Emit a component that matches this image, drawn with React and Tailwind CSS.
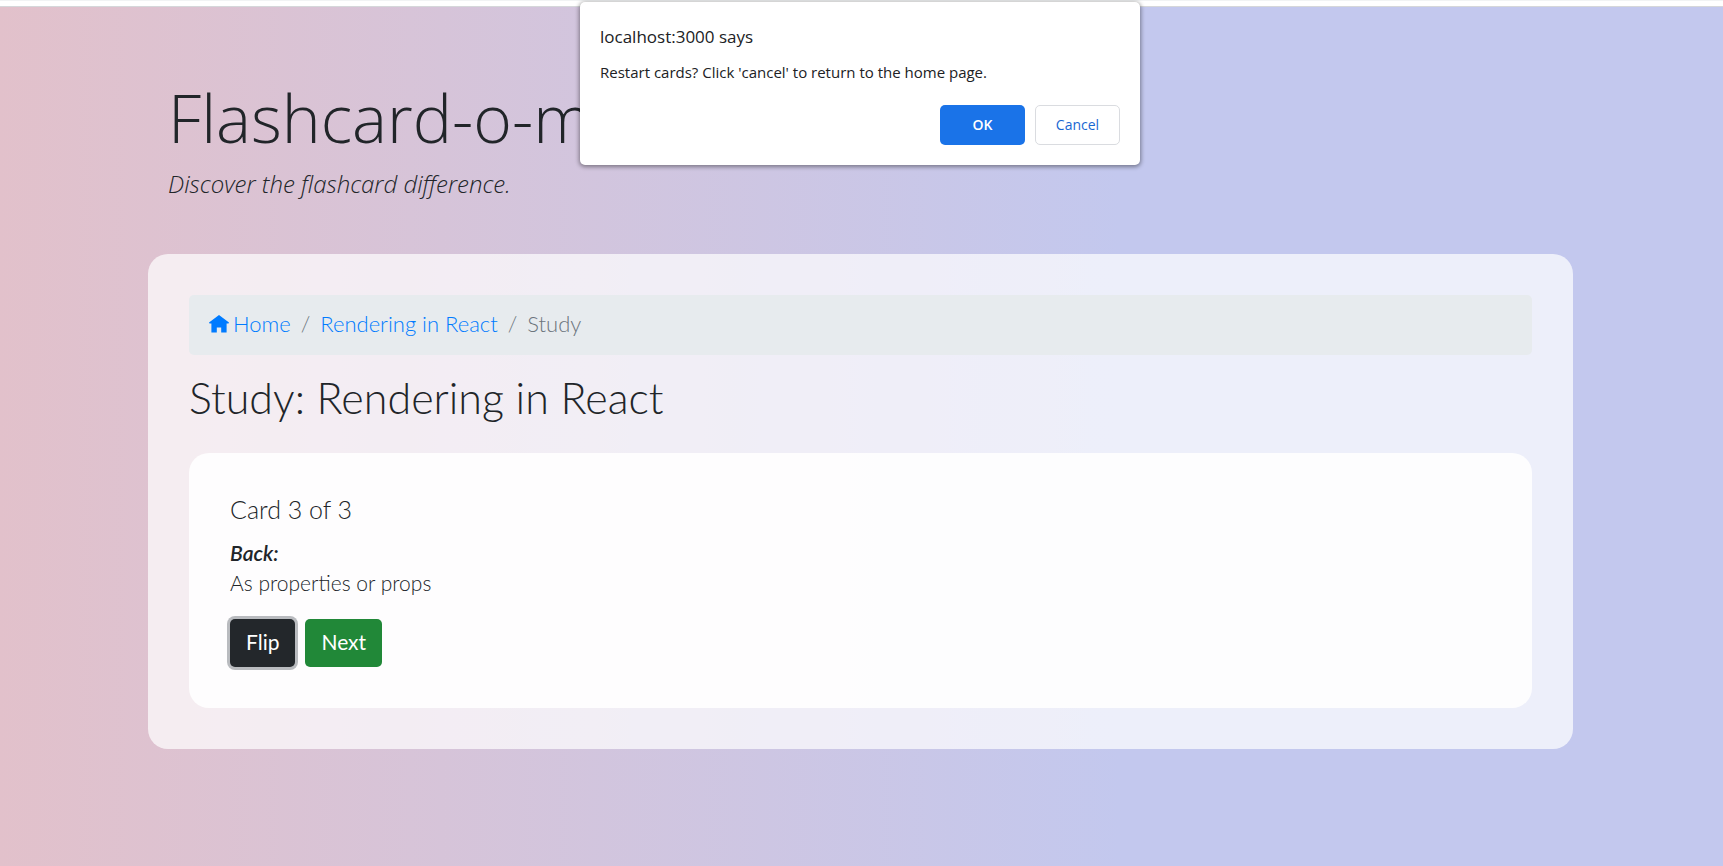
import React from "react";

function HomeIcon() {
  return (
    <svg viewBox="0 0 20 18" className="h-[18px] w-5 fill-current" aria-hidden="true">
      <path d="M10 0 0 7.6l.5.9H2.4V17.6H7.8V12.4h4.4v5.2h5.4V8.5h1.9l.5-.9Z" />
    </svg>
  );
}

function Header() {
  return (
    <header className="px-5 pt-[68px] font-['Open_Sans','Noto_Sans',sans-serif] font-light">
      <h1 className="text-[66px] leading-[84px]">Flashcard-o-matic</h1>
      <p className="mt-1.5 text-2xl leading-[38px] italic">Discover the flashcard difference.</p>
    </header>
  );
}

function Breadcrumb() {
  return (
    <nav aria-label="breadcrumb" className="rounded-[5px] bg-[#e7ebee] px-5 pt-3.5 pb-4">
      <ol className="flex items-center text-[22px] leading-[30px]">
        <li>
          <a href="#home" className="flex items-center gap-1 text-[#007bff]">
            <HomeIcon />
            Home
          </a>
        </li>
        <li className="px-[10px] text-[#6c757d]" aria-hidden="true">/</li>
        <li>
          <a href="#deck" className="text-[#007bff]">Rendering in React</a>
        </li>
        <li className="px-[10px] text-[#6c757d]" aria-hidden="true">/</li>
        <li className="text-[#6c757d]" aria-current="page">Study</li>
      </ol>
    </nav>
  );
}

function StudyCard() {
  return (
    <section className="mt-8 rounded-[20px] bg-white/90 p-[41px]">
      <h3 className="text-[25px] leading-[30px]">Card 3 of 3</h3>
      <p className="mt-3.5 text-[21px] leading-[30px]">
        <em className="font-semibold">Back:</em>
        <br />
        As properties or props
      </p>
      <div className="mt-[21px] flex gap-[10px] text-[21px] leading-[30px] font-normal text-white">
        <button type="button" className="rounded-[5px] bg-[#23272b] px-4 pt-2 pb-[10px] ring-[3px] ring-[#b9bbbf]">Flip</button>
        <button type="button" className="rounded-[5px] bg-[#218838] px-4 pt-2 pb-[10px]">Next</button>
      </div>
    </section>
  );
}

function ConfirmDialog() {
  return (
    <div
      role="dialog"
      aria-labelledby="dialog-title"
      className="absolute top-0.5 right-[3px] left-0 mx-auto w-[560px] rounded-[5px] bg-white p-5 font-['Open_Sans','Noto_Sans',sans-serif] font-normal text-[#202124] shadow-[0_1px_4px_1px_rgba(0,0,0,0.4)]"
    >
      <h2 id="dialog-title" className="text-[17px] leading-[30px]">localhost:3000 says</h2>
      <p className="mt-2 text-[15px] leading-6">Restart cards? Click 'cancel' to return to the home page.</p>
      <div className="mt-[21px] flex justify-end gap-[10px] text-sm font-semibold">
        <button type="button" className="h-10 w-[85px] rounded-[5px] bg-[#1a73e8] text-white">OK</button>
        <button type="button" className="h-10 w-[85px] rounded-[5px] border border-[#dadce0] font-medium text-[#1967d2]">Cancel</button>
      </div>
    </div>
  );
}

export default function App() {
  return (
    <div className="relative flex min-h-screen flex-col overflow-hidden font-['Lato',sans-serif] font-light text-[#212529]">
      <div className="h-[7px] border-t border-b border-t-[#f1f3f4] border-b-[#d5d7da] bg-white" />
      <div className="grow bg-linear-to-r from-[#e2c1cb] to-[#c3c8ee] to-65% pr-[150px] pl-[148px]">
        <Header />
        <main className="mt-[51px] mb-10 rounded-[20px] bg-white/70 p-[41px]">
          <Breadcrumb />
          <h2 className="mt-5 text-[43px] leading-[46px]">Study: Rendering in React</h2>
          <StudyCard />
        </main>
      </div>
      <ConfirmDialog />
    </div>
  );
}
